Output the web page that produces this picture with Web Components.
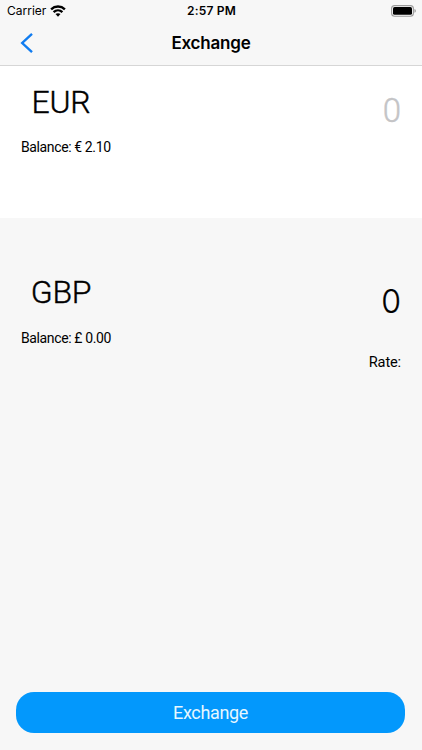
<!DOCTYPE html>
<html lang="en">
<head>
<meta charset="utf-8">
<title>Exchange</title>
<style>
html, body { margin: 0; height: 100%; }
body { font-family: Roboto, "Liberation Sans", sans-serif; color: #000; background: #f7f7f7; overflow: hidden; }
</style>
</head>
<body>
<exchange-screen></exchange-screen>
<script>
const define = (name, html) => customElements.define(name, class extends HTMLElement {
  constructor() {
    super();
    this.attachShadow({ mode: 'open' }).innerHTML = html;
  }
});

define('status-bar', `
<style>
:host { display: grid; grid-template-columns: 1fr auto 1fr; align-items: center; height: 22px; padding: 0 6px 0 7px; font-family: Inter, sans-serif; font-size: 12px; line-height: 22px; }
.left { display: flex; align-items: center; gap: 4px; }
.time { font-weight: 600; letter-spacing: .2px; }
.battery { justify-self: end; }
svg { display: block; }
</style>
<div class="left"><span class="carrier"><slot name="carrier"></slot></span>
<svg width="16" height="12" viewBox="0 0 16 12"><g fill="none" stroke="#000" stroke-width="2.4"><path d="M1.1 4.3C5 .6 11 .6 14.9 4.3"/><path d="M3.6 7.1C6.1 4.8 9.9 4.8 12.4 7.1"/></g><path d="M5.5 9.1C6.9 7.8 9.1 7.8 10.5 9.1L8 11.7Z"/></svg></div>
<span class="time"><slot name="time"></slot></span>
<svg class="battery" width="25" height="12" viewBox="0 0 25 12"><rect x=".6" y=".6" width="21.8" height="10.6" rx="3" fill="none" stroke="#9b9b9b" stroke-width="1.1"/><rect x="2" y="2" width="19" height="7.8" rx="1.6"/><path d="M23.5 4.1C25.2 4.8 25.2 7 23.5 7.7Z" fill="#8f8f8f"/></svg>`);

define('nav-bar', `
<style>
:host { display: grid; grid-template-columns: 1fr auto 1fr; align-items: center; height: 43px; padding: 0 20px; border-bottom: 1px solid #d6d6d6; font: 600 17px/43px Inter, sans-serif; letter-spacing: -.2px; }
svg { display: block; margin-top: -2px; }
</style>
<svg width="14" height="22" viewBox="0 0 14 22"><path d="M12 1.8L2.2 11L12 20.2" fill="none" stroke="#107cf0" stroke-width="2.4"/></svg>
<slot></slot><span></span>`);

define('currency-panel', `
<style>
:host { display: flex; justify-content: space-between; box-sizing: border-box; padding: 0 21px; }
.account { display: flex; flex-direction: column; }
.code { width: 80px; text-align: center; font-size: 32px; font-weight: 300; -webkit-text-stroke: .4px currentColor; line-height: 38px; letter-spacing: -.2px; }
.balance { font-size: 14px; line-height: 18px; margin-top: 18px; letter-spacing: -.38px; }
:host([empty]) .balance { margin-top: 17px; }
.amounts { display: flex; flex-direction: column; align-items: flex-end; }
.amount { font-size: 33px; font-weight: 300; -webkit-text-stroke: .4px currentColor; line-height: 38px; margin-top: 9px; }
:host([empty]) .amount { color: #c4c4c6; }
:host([result]) .amount { font-family: Inter, sans-serif; font-size: 32px; margin-top: 10px; -webkit-text-stroke-width: .2px; }
.rate { font-size: 14.6px; line-height: 20px; margin-top: 31px; letter-spacing: -.15px; }
</style>
<div class="account"><span class="code"><slot name="code"></slot></span><span class="balance"><slot name="balance"></slot></span></div>
<div class="amounts"><span class="amount"><slot name="amount"></slot></span><span class="rate"><slot name="rate"></slot></span></div>`);

define('primary-button', `
<style>
:host { display: block; }
button { display: block; width: 100%; height: 41px; padding: 1px 0 0; border: 0; border-radius: 18px; background: #0398fc; color: #e6f7ff; font: 18px/40px Roboto, sans-serif; letter-spacing: -.35px; }
</style>
<button><slot></slot></button>`);

define('exchange-screen', `
<style>
:host { display: flex; flex-direction: column; height: 100vh; background: #f7f7f7; }
.source { flex: none; height: 152px; padding-top: 17px; background: #fff; }
.target { flex: 1; padding-top: 55px; }
primary-button { margin: 0 17px 17px 16px; }
</style>
<status-bar><span slot="carrier">Carrier</span><span slot="time">2:57 PM</span></status-bar>
<nav-bar>Exchange</nav-bar>
<currency-panel class="source" empty><span slot="code">EUR</span><span slot="balance">Balance: € 2.10</span><span slot="amount">0</span></currency-panel>
<currency-panel class="target" result><span slot="code">GBP</span><span slot="balance">Balance: £ 0.00</span><span slot="amount">0</span><span slot="rate">Rate:</span></currency-panel>
<primary-button>Exchange</primary-button>`);
</script>
</body>
</html>
